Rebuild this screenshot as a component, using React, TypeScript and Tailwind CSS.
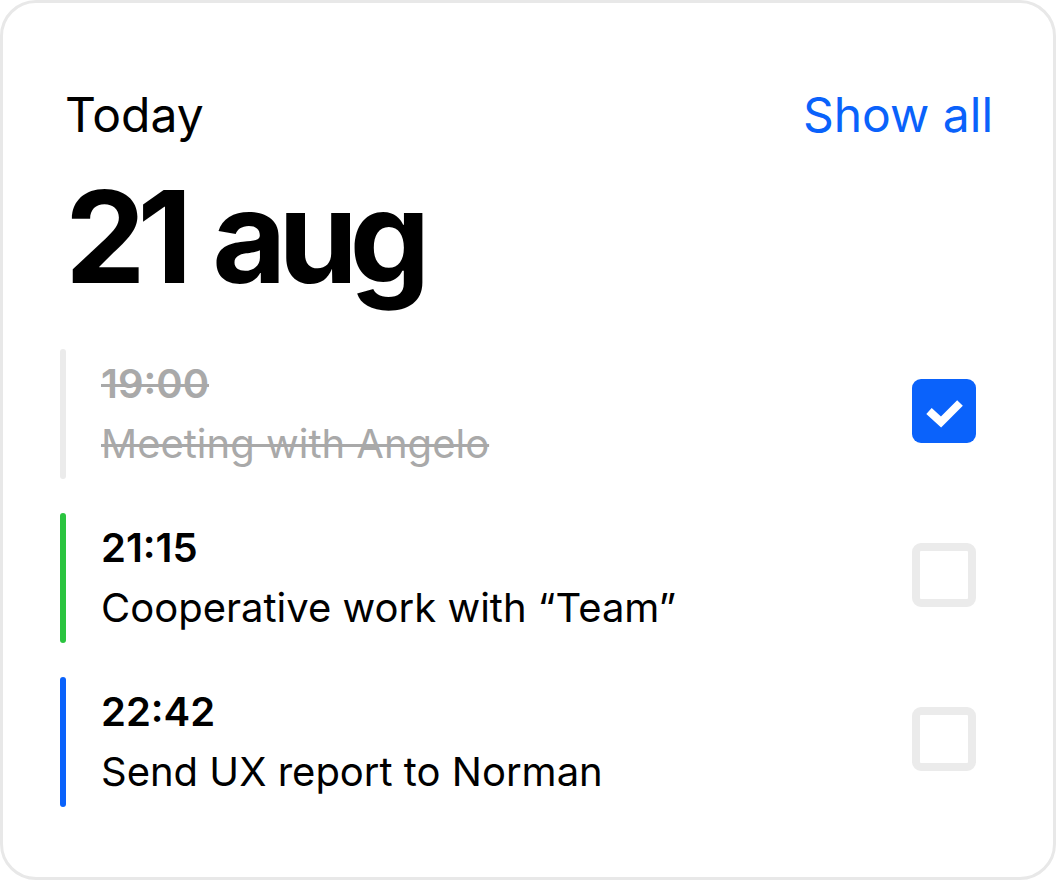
interface Task {
  time: string;
  title: string;
  accent: string;
  done: boolean;
}

const tasks: Task[] = [
  { time: '19:00', title: 'Meeting with Angelo', accent: 'bg-[#ebebeb]', done: true },
  { time: '21:15', title: 'Cooperative work with “Team”', accent: 'bg-[#2ac43f]', done: false },
  { time: '22:42', title: 'Send UX report to Norman', accent: 'bg-[#0a62fb]', done: false },
];

const CheckMark = () => (
  <svg viewBox="0 0 64 64" className="h-16 w-16">
    <path
      d="M17 32 29 43 48 24"
      fill="none"
      stroke="white"
      strokeWidth={8}
      strokeLinecap="butt"
      strokeLinejoin="miter"
    />
  </svg>
);

const TaskRow = ({ task }: { task: Task }) => {
  const { time, title, accent, done } = task;

  return (
    <div className="flex items-center">
      <div className={`w-[6px] self-stretch rounded-full ${accent}`} />
      <div
        className={`flex-1 py-[5px] pl-[35px] text-[40px] leading-[60px] ${
          done
            ? 'text-[#a9a9a9] line-through decoration-[3px]'
            : 'text-black'
        }`}
      >
        <p className="font-semibold">{time}</p>
        <p>{title}</p>
      </div>
      {done ? (
        <div className="mb-[6px] mr-[20px] h-16 w-16 rounded-[9px] bg-[#0a62fb]">
          <CheckMark />
        </div>
      ) : (
        <div className="mb-[6px] mr-[20px] h-16 w-16 rounded-[9px] border-[8px] border-[#ebebeb]" />
      )}
    </div>
  );
};

const App = () => {
  return (
    <div className="h-[880px] w-[1056px] bg-white font-['Inter',sans-serif]">
      <div className="flex h-full w-full flex-col rounded-[36px] border-[3px] border-[#e8e8e8] px-[57px] pt-[83px]">
        <div className="flex items-center justify-between pl-[5px] pr-[3px] text-[48px] leading-[58px]">
          <span className="text-black">Today</span>
          <span className="text-[#0a62fb]">Show all</span>
        </div>
        <h1 className="mt-[29px] pl-[5px] text-[128px] font-bold leading-[128px] tracking-[-0.065em] text-black [word-spacing:6px]">
          21 aug
        </h1>
        <div className="mt-[48px] flex flex-col gap-[34px]">
          {tasks.map((task) => (
            <TaskRow key={task.time} task={task} />
          ))}
        </div>
      </div>
    </div>
  );
};

export default App;
